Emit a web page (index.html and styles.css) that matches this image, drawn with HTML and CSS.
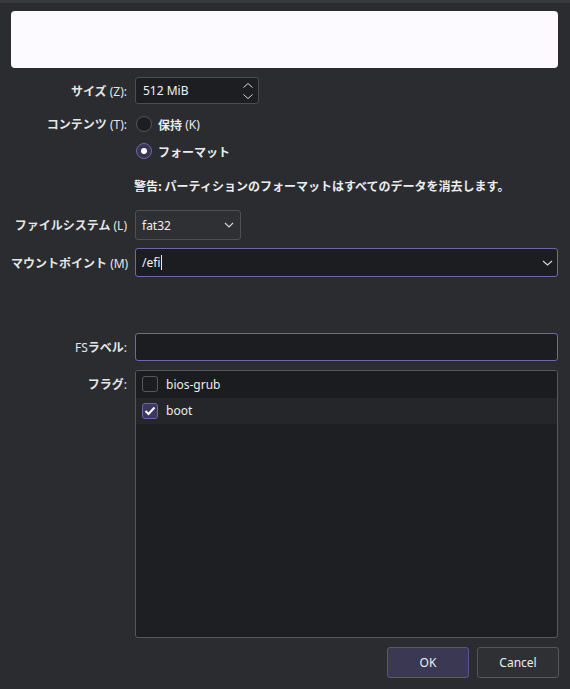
FILE: index.html
```html
<!DOCTYPE html>
<html lang="ja">
<head>
<meta charset="utf-8">
<link rel="stylesheet" href="styles.css">
</head>
<body>
<div class="topstrip"></div>
<div class="dialog">
  <div class="preview"></div>

  <div class="row r-size">
    <div class="label"><span class="jp">サイズ</span> (Z):</div>
    <div class="spin">
      <span class="val">512 MiB</span>
      <span class="arrows">
        <svg width="10" height="5" viewBox="0 0 10 5"><path d="M0.5 4.5 L5 0.5 L9.5 4.5" fill="none" stroke="#d8d8da" stroke-width="1"/></svg>
        <svg width="10" height="5" viewBox="0 0 10 5"><path d="M0.5 0.5 L5 4.5 L9.5 0.5" fill="none" stroke="#d8d8da" stroke-width="1"/></svg>
      </span>
    </div>
  </div>

  <div class="row r-radio1">
    <div class="label"><span class="jp">コンテンツ</span> (T):</div>
    <div class="radio-item"><span class="radio"></span><span class="jp">保持</span>&nbsp;(K)</div>
  </div>

  <div class="row r-radio2">
    <div class="label"></div>
    <div class="radio-item"><span class="radio on"></span><span class="jp">フォーマット</span></div>
  </div>

  <div class="row r-warn">
    <div class="label"></div>
    <div class="warn jp">警告: パーティションのフォーマットはすべてのデータを消去します。</div>
  </div>

  <div class="row r-fs">
    <div class="label"><span class="jp">ファイルシステム</span> (L)</div>
    <div class="combo">
      <span class="val">fat32</span>
      <svg width="10" height="6" viewBox="0 0 10 6"><path d="M1 1 L5 5 L9 1" fill="none" stroke="#d8d8da" stroke-width="1.1"/></svg>
    </div>
  </div>

  <div class="row r-mount">
    <div class="label"><span class="jp">マウントポイント</span> (M)</div>
    <div class="edit-combo">
      <span class="val">/efi<span class="caret"></span></span>
      <svg width="11" height="6" viewBox="0 0 11 6"><path d="M1 1 L5.5 5 L10 1" fill="none" stroke="#d8d8da" stroke-width="1.1"/></svg>
    </div>
  </div>

  <div class="row r-fslabel">
    <div class="label">FS<span class="jp">ラベル</span>:</div>
    <div class="edit"></div>
  </div>

  <div class="row r-flags">
    <div class="label top"><span class="jp">フラグ</span>:</div>
    <div class="list">
      <div class="item dark"><span class="check"></span>bios-grub</div>
      <div class="item light"><span class="check on"><svg width="12" height="10" viewBox="0 0 12 10"><path d="M1.5 5 L4.5 8 L10.5 1.5" fill="none" stroke="#ffffff" stroke-width="2"/></svg></span>boot</div>
    </div>
  </div>

  <div class="buttons">
    <div class="btn ok">OK</div>
    <div class="btn cancel">Cancel</div>
  </div>
</div>
</body>
</html>
```

FILE: styles.css
```css
html, body {
  margin: 0;
  padding: 0;
  background: #2a2c2f;
  font-family: "Noto Sans", "Noto Sans CJK JP", sans-serif;
  font-size: 12px;
  color: #e6e6e8;
  width: 570px;
  height: 689px;
  overflow: hidden;
}
.topstrip {
  height: 3px;
  background: #37393c;
}
.dialog {
  padding: 8px 11px 0 11px;
  display: flex;
  flex-direction: column;
}
.jp {
  font-family: "Noto Sans CJK JP", sans-serif;
  font-weight: 700;
}
.preview {
  height: 57px;
  background: #fcfaff;
  border-radius: 4px;
  margin-right: 1px;
}
.row {
  display: flex;
  align-items: center;
  margin-right: 1px;
}
.label {
  width: 116px;
  flex: none;
  margin-right: 8px;
  text-align: right;
  white-space: nowrap;
  color: #e6e6e8;
}
.label.top {
  align-self: flex-start;
  padding-top: 5px;
}
.r-size { margin-top: 9px; height: 27px; }
.r-radio1 { margin-top: 9px; height: 22px; }
.r-radio2 { margin-top: 5px; height: 22px; }
.r-warn { margin-top: 14px; height: 18px; }
.r-fs { margin-top: 16px; height: 30px; }
.r-mount { margin-top: 8px; height: 29px; }
.r-fslabel { margin-top: 56px; height: 28px; }
.r-flags { margin-top: 9px; height: 268px; align-items: stretch; }

.spin {
  width: 124px;
  height: 27px;
  box-sizing: border-box;
  background: #1d1e21;
  border: 1px solid #4b4d51;
  border-radius: 3px;
  display: flex;
  align-items: center;
  justify-content: space-between;
  padding: 0 4px 0 7px;
  color: #f2f2f4;
}
.arrows {
  display: flex;
  flex-direction: column;
  gap: 6px;
  margin-right: 1px;
}
.arrows svg { display: block; }

.radio-item {
  display: flex;
  align-items: center;
  margin-left: 1px;
  color: #ececee;
}
.radio {
  width: 16px;
  height: 16px;
  box-sizing: border-box;
  border-radius: 50%;
  border: 1px solid #54565a;
  background: #1c1d20;
  margin-right: 6px;
  display: flex;
  align-items: center;
  justify-content: center;
}
.radio.on {
  border-color: #6f64ad;
  background: #3a3553;
}
.radio.on::after {
  content: "";
  width: 6px;
  height: 6px;
  border-radius: 50%;
  background: #ffffff;
}
.warn {
  margin-left: -1px;
  color: #ececee;
  white-space: nowrap;
}

.combo {
  width: 106px;
  height: 30px;
  box-sizing: border-box;
  background: #2e3034;
  border: 1px solid #4f5155;
  border-radius: 3px;
  display: flex;
  align-items: center;
  justify-content: space-between;
  padding: 0 6px 0 6px;
  color: #f0f0f2;
}
.edit-combo {
  flex: 1;
  height: 29px;
  box-sizing: border-box;
  background: #1c1d20;
  border: 1px solid #7066b0;
  border-radius: 3px;
  display: flex;
  align-items: center;
  justify-content: space-between;
  padding: 0 4px 0 6px;
  color: #f2f2f4;
}
.caret {
  display: inline-block;
  width: 1px;
  height: 15px;
  background: #e8e8ea;
  vertical-align: -3px;
  margin-left: 1px;
}
.edit {
  flex: 1;
  height: 28px;
  box-sizing: border-box;
  background: #1c1d20;
  border: 1px solid #7066b0;
  border-radius: 3px;
}

.list {
  flex: 1;
  box-sizing: border-box;
  background: #1e1f22;
  border: 1px solid #56585c;
  border-radius: 3px;
  display: flex;
  flex-direction: column;
  overflow: hidden;
}
.item {
  height: 26.5px;
  display: flex;
  align-items: center;
  padding-left: 6px;
  color: #ececee;
}
.item.dark { background: #1b1c1f; }
.item.light { background: #24262a; }
.check {
  width: 16px;
  height: 16px;
  box-sizing: border-box;
  border: 1px solid #56585c;
  border-radius: 3px;
  background: #1c1d20;
  margin-right: 8px;
  display: flex;
  align-items: center;
  justify-content: center;
}
.check.on {
  border-color: #6f64ad;
  background: #3c3762;
}
.check svg { display: block; }

.buttons {
  display: flex;
  justify-content: flex-end;
  gap: 8px;
  margin-top: 9px;
}
.btn {
  width: 82px;
  height: 31px;
  box-sizing: border-box;
  border-radius: 3px;
  display: flex;
  align-items: center;
  justify-content: center;
  color: #eeeef0;
}
.btn.ok {
  background: #3b3853;
  border: 1px solid #5b548c;
}
.btn.cancel {
  background: #2e3034;
  border: 1px solid #55575b;
}
```
